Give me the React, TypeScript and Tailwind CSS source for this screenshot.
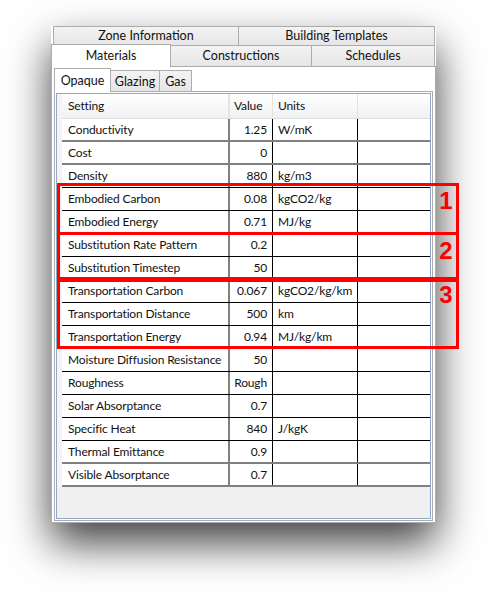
import React from "react";

type Row = { name: string; value: string; units: string; thick?: boolean };

const rows: Row[] = [
  { name: "Conductivity", value: "1.25", units: "W/mK", thick: true },
  { name: "Cost", value: "0", units: "", thick: true },
  { name: "Density", value: "880", units: "kg/m3" },
  { name: "Embodied Carbon", value: "0.08", units: "kgCO2/kg" },
  { name: "Embodied Energy", value: "0.71", units: "MJ/kg" },
  { name: "Substitution Rate Pattern", value: "0.2", units: "" },
  { name: "Substitution Timestep", value: "50", units: "" },
  { name: "Transportation Carbon", value: "0.067", units: "kgCO2/kg/km" },
  { name: "Transportation Distance", value: "500", units: "km" },
  { name: "Transportation Energy", value: "0.94", units: "MJ/kg/km" },
  { name: "Moisture Diffusion Resistance", value: "50", units: "" },
  { name: "Roughness", value: "Rough", units: "" },
  { name: "Solar Absorptance", value: "0.7", units: "" },
  { name: "Specific Heat", value: "840", units: "J/kgK" },
  { name: "Thermal Emittance", value: "0.9", units: "", thick: true },
  { name: "Visible Absorptance", value: "0.7", units: "", thick: true },
];

const tab =
  "flex items-center justify-center border border-[#acacac] bg-linear-to-b from-[#f3f3f3] to-[#e6e6e6]";

export default function App() {
  return (
    <div className="relative w-[487px] h-[599px] overflow-hidden bg-white pt-[26px] pl-[51px] text-[12px] tracking-[-0.15px] text-[#111] font-['Lato','Noto_Sans',sans-serif]">
      {/* window */}
      <div className="flex flex-col w-[385px] h-[497px] bg-white shadow-[0_20px_40px_rgba(0,0,0,0.75)]">
        {/* top tab row */}
        <div className="flex h-[20px] pl-[2px] pr-[1px] text-[12.5px] tracking-normal">
          <div className={`${tab} w-[186px]`}>Zone Information</div>
          <div className={`${tab} flex-1 border-l-0`}>Building Templates</div>
        </div>
        {/* second tab row */}
        <div className="relative z-10 flex h-[22px] -mt-[2px] items-end pr-[1px] text-[12.5px] tracking-normal">
          <div className="flex h-[23px] w-[120px] -mb-px items-center justify-center border border-b-0 border-[#acacac] bg-white">
            Materials
          </div>
          <div className={`${tab} h-[21px] w-[141px] border-l-0 border-b-0`}>Constructions</div>
          <div className={`${tab} h-[21px] flex-1 border-l-0 border-b-0`}>Schedules</div>
        </div>
        {/* outer panel */}
        <div className="flex flex-1 flex-col border border-[#acacac] bg-white px-[2px] pt-px pb-px">
          {/* inner tabs */}
          <div className="relative z-10 flex h-[23px] items-end text-[12.5px] tracking-normal">
            <div className="flex h-[24px] w-[57px] -mb-px items-center justify-center border border-b-0 border-[#acacac] bg-white pt-[2px]">
              Opaque
            </div>
            <div className={`${tab} h-[21px] w-[49px] border-l-0 border-b-0 pt-[2px]`}>Glazing</div>
            <div className={`${tab} h-[21px] w-[32px] border-l-0 border-b-0 pt-[2px]`}>Gas</div>
          </div>
          {/* inner panel */}
          <div className="flex flex-1 flex-col border border-[#acacac] bg-white p-px">
            {/* data grid */}
            <div className="flex flex-1 flex-col border border-[#8fa9cc] bg-[#f0f0f0]">
              {/* header */}
              <div className="flex h-[25px]">
                <div className="w-[5px] bg-[#f4f4f4]" />
                <div className="flex flex-1 border-b border-[#dcdcdc] bg-linear-to-b from-white to-[#f0f1f3]">
                  <div className="flex w-[168px] items-center border-r-2 border-[#e4e4e4] pl-[6px]">Setting</div>
                  <div className="flex w-[43px] items-center border-r border-[#e4e4e4] pl-[4px]">Value</div>
                  <div className="flex w-[85px] items-center border-r border-[#e4e4e4] pl-[5px]">Units</div>
                  <div className="flex-1" />
                </div>
              </div>
              {rows.map((r) => (
                <div key={r.name} className="flex h-[23px]">
                  <div className="w-[5px] bg-[#f4f4f4]" />
                  <div
                    className={`flex flex-1 bg-white ${
                      r.thick ? "border-b-2 border-[#808080]" : "border-b border-black"
                    }`}
                  >
                    <div className="flex w-[168px] items-center border-r-2 border-[#808080] pl-[6px] whitespace-nowrap">
                      {r.name}
                    </div>
                    <div className="flex w-[43px] items-center justify-end border-r border-black pr-[5px]">
                      {r.value}
                    </div>
                    <div className="flex w-[85px] items-center border-r border-black pl-[5px] whitespace-nowrap">
                      {r.units}
                    </div>
                    <div className="flex-1" />
                  </div>
                </div>
              ))}
            </div>
          </div>
        </div>
      </div>

      {/* red annotation boxes */}
      <div className="absolute left-[57px] top-[183px] h-[52px] w-[402px] border-[3px] border-[#ff0000]" />
      <div className="absolute left-[57px] top-[232px] h-[48px] w-[402px] border-[3px] border-[#ff0000]" />
      <div className="absolute left-[57px] top-[279px] h-[70px] w-[402px] border-[3px] border-[#ff0000]" />
      <div className="absolute left-[436px] top-[189px] w-[20px] text-center text-[24px] leading-[24px] font-bold tracking-normal text-[#ff0000] font-['Liberation_Sans',Arial,sans-serif]">
        1
      </div>
      <div className="absolute left-[436px] top-[239px] w-[20px] text-center text-[24px] leading-[24px] font-bold tracking-normal text-[#ff0000] font-['Liberation_Sans',Arial,sans-serif]">
        2
      </div>
      <div className="absolute left-[436px] top-[283px] w-[20px] text-center text-[24px] leading-[24px] font-bold tracking-normal text-[#ff0000] font-['Liberation_Sans',Arial,sans-serif]">
        3
      </div>
    </div>
  );
}
